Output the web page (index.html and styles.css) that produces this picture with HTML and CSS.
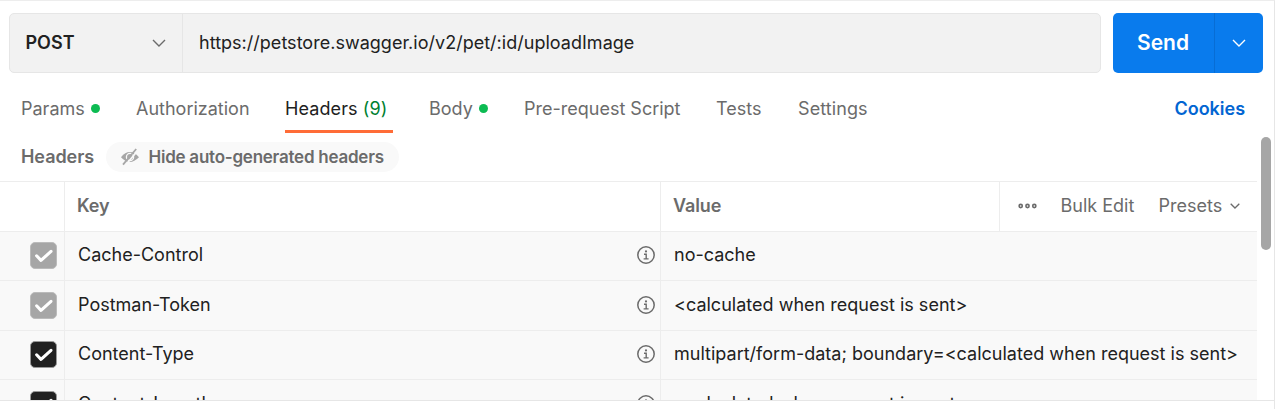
FILE: index.html
```html
<!DOCTYPE html>
<html lang="en">
<head>
<meta charset="utf-8">
<title>Request</title>
<link rel="stylesheet" href="styles.css">
</head>
<body>
<svg class="defs" width="0" height="0">
  <symbol id="check" viewBox="0 0 25 25"><path d="M5.6 12.8l4.4 4.6L20 8.4" fill="none" stroke="#fff" stroke-width="3.1" stroke-linecap="round" stroke-linejoin="round"/></symbol>
  <symbol id="info" viewBox="0 0 18 18"><circle cx="9" cy="9" r="8.2" fill="none" stroke="#6b6b6b" stroke-width="1.5"/><circle cx="9" cy="5.4" r="1.1" fill="#6b6b6b"/><path d="M7 8.2h2.2v4.5M6.6 12.9h5" fill="none" stroke="#6b6b6b" stroke-width="1.4"/></symbol>
</svg>
<main class="pane">
  <div class="request">
    <div class="url-bar">
      <div class="method"><span class="t-post">POST</span><svg width="14" height="8" viewBox="0 0 14 8"><path d="M1 1l6 6 6-6" fill="none" stroke="#6b6b6b" stroke-width="1.4"/></svg></div>
      <div class="url"><span class="t-url">https://petstore.swagger.io/v2/pet/:id/uploadImage</span></div>
    </div>
    <div class="send"><div class="send-main"><span>Send</span></div><div class="send-more"><svg width="14" height="8" viewBox="0 0 14 8"><path d="M1 1l6 6 6-6" fill="none" stroke="#fff" stroke-width="1.4"/></svg></div></div>
  </div>
  <nav class="tabs">
    <div class="tab w-params"><span>Params</span><i class="dot"></i></div>
    <div class="tab w-auth"><span>Authorization</span></div>
    <div class="tab w-headers active"><span>Headers <b>(9)</b></span></div>
    <div class="tab w-body"><span>Body</span><i class="dot"></i></div>
    <div class="tab w-pre"><span>Pre-request Script</span></div>
    <div class="tab w-tests"><span>Tests</span></div>
    <div class="tab w-settings"><span>Settings</span></div>
    <a class="cookies">Cookies</a>
  </nav>
  <div class="content">
    <div class="scroll-area">
      <div class="section">
        <span class="section-title">Headers</span>
        <div class="pill">
          <svg width="20" height="18" viewBox="0 0 20 18"><path d="M1 9.2Q9.5-1 19 9.2Q9.5 18.6 1 9.2z" fill="#a6a6a6"/><circle cx="10" cy="9" r="3.6" fill="none" stroke="#f9f9f9" stroke-width="1.3"/><path d="M4.8 18L18.2 2" stroke="#f9f9f9" stroke-width="1.8"/><path d="M3 16.6L16.2 1" stroke="#a6a6a6" stroke-width="1.8"/></svg>
          <span>Hide auto-generated headers</span>
        </div>
      </div>
      <div class="table">
        <div class="row head">
          <div class="c-check"></div><div class="c-key">Key</div><div class="c-value">Value</div>
          <div class="actions">
            <svg width="19" height="6" viewBox="0 0 19 6"><g fill="none" stroke="#6b6b6b" stroke-width="1.6"><circle cx="2.7" cy="3" r="1.6"/><circle cx="9.5" cy="3" r="1.6"/><circle cx="16.3" cy="3" r="1.6"/></g></svg>
            <span class="bulk">Bulk Edit</span><span class="presets">Presets</span>
            <svg width="10" height="6" viewBox="0 0 10 6"><path d="M.7.7L5 5 9.3.7" fill="none" stroke="#6b6b6b" stroke-width="1.3"/></svg>
          </div>
        </div>
        <div class="row r1"><div class="c-check"><svg class="box off"><use href="#check"/></svg></div><div class="c-key"><span>Cache-Control</span><svg class="info"><use href="#info"/></svg></div><div class="c-value">no-cache</div></div>
        <div class="row r2"><div class="c-check"><svg class="box off"><use href="#check"/></svg></div><div class="c-key"><span>Postman-Token</span><svg class="info"><use href="#info"/></svg></div><div class="c-value">&lt;calculated when request is sent&gt;</div></div>
        <div class="row r3"><div class="c-check"><svg class="box"><use href="#check"/></svg></div><div class="c-key"><span>Content-Type</span><svg class="info"><use href="#info"/></svg></div><div class="c-value">multipart/form-data; boundary=&lt;calculated when request is sent&gt;</div></div>
        <div class="row r4"><div class="c-check"><svg class="box"><use href="#check"/></svg></div><div class="c-key"><span>Content-Length</span><svg class="info"><use href="#info"/></svg></div><div class="c-value">&lt;calculated when request is sent&gt;</div></div>
      </div>
    </div>
    <div class="scrollbar"></div>
  </div>
</main>
</body>
</html>
```
FILE: styles.css
```css
* { box-sizing: border-box; }
body { margin: 0; background: #fff; color: #212121; font: 400 18px/24px Inter, sans-serif; white-space: nowrap; overflow: hidden; }
svg { display: block; flex: none; }
.defs { position: absolute; }
.pane { width: 1275px; height: 409px; border-top: 1px solid #ededed; border-right: 1px solid #e6e6e6; }
.request { display: flex; gap: 12px; padding: 12px 0 0 9px; }
.url-bar { display: flex; width: 1092px; height: 60px; background: #f2f2f2; border: 1px solid #e6e6e6; border-radius: 5px; }
.method { display: flex; align-items: center; justify-content: space-between; width: 173px; padding: 0 16px 0 15.5px; border-right: 1px solid #e6e6e6; }
.t-post { font-weight: 600; }
.url { display: flex; align-items: center; padding-left: 16px; letter-spacing: 0.02px; }
.send { display: flex; width: 150px; height: 60px; background: #097bed; color: #fff; border-radius: 5px; }
.send-main { display: flex; align-items: center; justify-content: center; width: 102px; padding-right: 1px; border-right: 1px solid #076dd5; font-size: 21px; font-weight: 600; }
.send-more { display: flex; align-items: center; justify-content: center; flex: 1; }
.tabs { display: flex; height: 60px; padding: 0 29px 0 21px; color: #6b6b6b; }
.tab { display: flex; align-items: center; height: 60px; padding-top: 14px; border-bottom: 3px solid transparent; margin-right: 36px; flex: none; }
.tab b { color: #007f31; font-weight: 400; }
.active { color: #212121; border-color: #ff6c37; letter-spacing: 0.1px; }
.dot { width: 9px; height: 9px; border-radius: 50%; background: #0cbb52; margin-left: auto; }
.w-params { width: 79px; }
.w-auth { width: 113px; }
.w-headers { width: 108px; }
.w-body { width: 59px; }
.w-pre { width: 156px; }
.w-tests { width: 46px; }
.w-settings { letter-spacing: 0.1px; }
.cookies { margin-left: auto; padding-top: 24px; color: #0265d2; font-weight: 600; letter-spacing: -0.03px; }
.content { display: flex; height: 268px; border-bottom: 1px solid #e6e6e6; overflow: hidden; }
.scroll-area { width: 1257px; }
.section { display: flex; align-items: center; height: 48px; padding-left: 21px; color: #6b6b6b; font-weight: 600; }
.section-title { width: 85px; letter-spacing: -0.05px; }
.pill { display: flex; align-items: center; gap: 8.5px; width: 293px; height: 30px; padding-left: 14px; border-radius: 15px; background: #f9f9f9; font-size: 17px; letter-spacing: -0.24px; }
.row { display: flex; background: #f9f9f9; border-top: 1px solid #ededed; }
.row > div { display: flex; align-items: center; }
.row .c-check { width: 65px; border-right: 1px solid #ededed; padding: 0 0 1px 30px; }
.row .c-key { width: 596px; border-right: 1px solid #ededed; padding: 0 5px 2px 13px; justify-content: space-between; }
.row .c-value { padding: 0 0 2px 13px; letter-spacing: 0.01px; }
.head { height: 50px; background: #fff; color: #6b6b6b; }
.head .c-key, .head .c-value { font-weight: 600; padding: 0 0 2px 12px; letter-spacing: -0.1px; }
.head .c-value { width: 338px; }
.head .actions { flex: 1; padding: 0 0 2px 17.5px; border-left: 1px solid #ededed; }
.bulk { width: 74px; margin-left: 24px; }
.presets { width: 65px; margin: 0 6px 0 24px; }
.r1, .r3 { height: 49px; }
.r1 .c-check, .r3 .c-check { padding-bottom: 2px; }
.r2, .r4 { height: 50px; }
.box { width: 27px; height: 27px; border-radius: 5px; background: #212121; border: 1px solid #999; }
.off { background: #a6a6a6; border-color: #bbb; }
.info { width: 18px; height: 18px; }
.scrollbar { width: 10px; height: 113px; margin: 4px 0 0 4px; border-radius: 5px; background: #a6a6a6; }
```
